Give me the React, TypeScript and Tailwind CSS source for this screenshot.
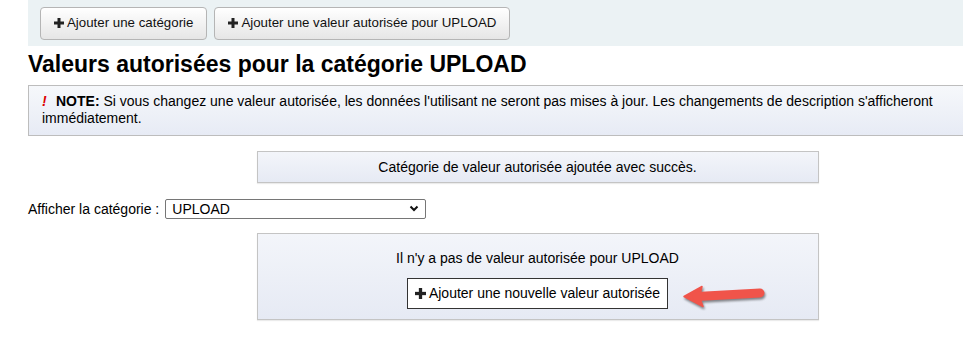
import React from 'react';

function PlusIcon({ size = 10 }: { size?: number }) {
  return (
    <svg
      width={size}
      height={size}
      viewBox="0 0 10 10"
      className="inline-block mr-[3px] -mt-[2px] align-middle"
    >
      <rect x="3.5" y="0" width="3" height="10" fill="#222" />
      <rect x="0" y="3.5" width="10" height="3" fill="#222" />
    </svg>
  );
}

function ToolbarButton({ children }: { children: React.ReactNode }) {
  return (
    <button className="h-[33px] px-[13px] border border-[#b5b5b5] rounded-[4px] bg-gradient-to-b from-white to-[#e6e6e6] text-[13.3px] text-[#111] shadow-[inset_0_1px_0_rgba(255,255,255,0.8)]">
      <PlusIcon />
      {children}
    </button>
  );
}

function RedArrow() {
  return (
    <svg
      width="90"
      height="34"
      viewBox="0 0 90 34"
      className="absolute left-[423px] top-[45px] drop-shadow-[1px_2px_1px_rgba(0,0,0,0.45)]"
    >
      <path
        d="M3 17.5 L21 7.5 L19.5 13.5 L20 22 L22 27.5 Z"
        fill="#f0544a"
        stroke="#f0544a"
        strokeWidth="1.5"
        strokeLinejoin="round"
      />
      <line x1="16" y1="17.5" x2="79" y2="14" stroke="#f0544a" strokeWidth="9" strokeLinecap="round" />
    </svg>
  );
}

export default function App() {
  return (
    <div className="w-[963px] h-[343px] overflow-hidden bg-white font-['Liberation_Sans',Arial,sans-serif] text-[14px] text-black">
      <div className="ml-[28px] w-[1019px]">
        <div className="h-[46px] bg-[#ebf2f4] flex items-center gap-[7px] pl-[12px]">
          <ToolbarButton>Ajouter une catégorie</ToolbarButton>
          <ToolbarButton>Ajouter une valeur autorisée pour UPLOAD</ToolbarButton>
        </div>

        <h1 className="mt-[4px] text-[23px] font-bold leading-[28px]">
          Valeurs autorisées pour la catégorie UPLOAD
        </h1>

        <div className="mt-[7px] h-[51px] border border-[#bdbdbd] bg-gradient-to-b from-[#f6f8fb] to-[#e7ebf5] pl-[13px] pr-[24px] pt-[7px]">
          <p className="leading-[17px]">
            <span className="inline-block w-[7px] text-[#d00] font-bold italic mr-[7px]">!</span>
            <strong>NOTE:</strong> Si vous changez une valeur autorisée, les données l'utilisant ne seront pas mises à jour. Les changements de description s'afficheront immédiatement.
          </p>
        </div>

        <div className="mt-[15px] mx-auto w-[562px] h-[32px] border border-[#c4c4c4] bg-gradient-to-b from-[#f3f5fa] to-[#e6eaf4] flex items-center justify-center shadow-[0_1px_1px_rgba(0,0,0,0.08)]">
          Catégorie de valeur autorisée ajoutée avec succès.
        </div>

        <div className="mt-[16px] flex items-center h-[20px]">
          <label className="mr-[6px]">Afficher la catégorie :</label>
          <div className="relative">
            <select className="appearance-none w-[261px] h-[20px] border border-[#767676] rounded-[2px] bg-white pl-[6px] text-[14px] leading-[18px] outline-none">
              <option>UPLOAD</option>
            </select>
            <svg
              width="10"
              height="8"
              viewBox="0 0 10 8"
              className="absolute right-[7px] top-[6px] pointer-events-none"
            >
              <path d="M1.5 1.5 L5 5 L8.5 1.5" fill="none" stroke="#111" strokeWidth="2" />
            </svg>
          </div>
        </div>

        <div className="relative mt-[14px] mx-auto w-[562px] h-[87px] border border-[#c4c4c4] bg-gradient-to-b from-[#f3f5fa] to-[#e6eaf4] flex flex-col items-center pt-[15px] shadow-[0_1px_1px_rgba(0,0,0,0.08)]">
          <p className="leading-[18px]">Il n'y a pas de valeur autorisée pour UPLOAD</p>
          <button className="mt-[11px] h-[31px] px-[7px] border border-[#333] bg-white text-[14px]">
            <PlusIcon size={11} />
            Ajouter une nouvelle valeur autorisée
          </button>
          <RedArrow />
        </div>
      </div>
    </div>
  );
}
